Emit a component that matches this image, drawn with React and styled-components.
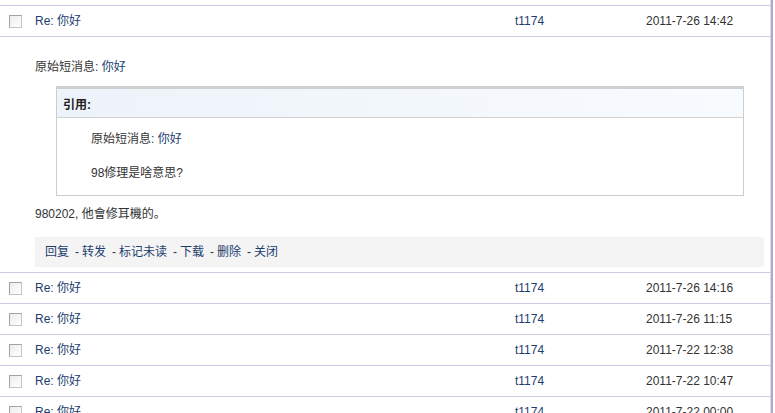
import React from "react";
import styled, { createGlobalStyle } from "styled-components";

const GlobalStyle = createGlobalStyle`
  html, body {
    margin: 0;
    padding: 0;
    background: #fff;
    overflow: hidden;
  }
  body {
    font-family: "Liberation Sans", Arial, "Noto Sans CJK SC", sans-serif;
    font-size: 12px;
    color: #333;
  }
`;

const messages = [
  { subject: "Re: 你好", author: "t1174", date: "2011-7-26 14:16" },
  { subject: "Re: 你好", author: "t1174", date: "2011-7-26 11:15" },
  { subject: "Re: 你好", author: "t1174", date: "2011-7-22 12:38" },
  { subject: "Re: 你好", author: "t1174", date: "2011-7-22 10:47" },
  { subject: "Re: 你好", author: "t1174", date: "2011-7-22 00:00" },
];

const actions = ["回复", "转发", "标记未读", "下载", "删除", "关闭"];

const Frame = styled.div`
  width: 771px;
  height: 413px;
  padding-top: 5px;
  box-sizing: border-box;
  border-right: 1px solid #dcdcf0;
  box-shadow: 2px 0 0 #a9a9d6;
`;

const Row = styled.div`
  display: grid;
  grid-template-columns: 26px 480px 131px 1fr;
  align-items: center;
  height: 30px;
  padding-left: 9px;
  border-top: 1px solid #cbcbe6;
`;

const Check = styled.span`
  display: block;
  width: 11px;
  height: 11px;
  border: 1px solid #a3a3a3;
  border-right-color: #c4c4c4;
  border-bottom-color: #c4c4c4;
  background: linear-gradient(135deg, #ececec, #ffffff);
`;

const Link = styled.a`
  color: #1c3d6f;
  text-decoration: none;
  cursor: pointer;
  line-height: 16px;
`;

const DateText = styled.span`
  color: #333;
`;

const Detail = styled.div`
  border-top: 1px solid #cbcbe6;
  padding: 22px 6px 5px 35px;
`;

const Para = styled.p`
  margin: ${(p) => p.$mt || 0}px 0 0;
  line-height: 16px;
`;

const Quote = styled.div`
  margin: 11px 20px 0 21px;
  border: 1px solid #cdcdcd;
  border-top: 3px solid #cfcfcf;
`;

const QuoteHead = styled.div`
  height: 28px;
  display: flex;
  align-items: center;
  padding-left: 6px;
  font-weight: bold;
  color: #222;
  background: linear-gradient(to right, #edf3fa, #f8fbfe);
  border-bottom: 1px solid #d2d2d2;
`;

const QuoteBody = styled.div`
  padding: 13px 0 14px 34px;
`;

const ActionBar = styled.div`
  margin-top: 15px;
  height: 30px;
  display: flex;
  align-items: center;
  padding-left: 10px;
  background: #f4f4f4;
`;

const Sep = styled.span`
  padding: 0 3px 0 6px;
  color: #333;
`;

const MessageRow = ({ subject, author, date }) => (
  <Row>
    <Check />
    <Link>{subject}</Link>
    <Link>{author}</Link>
    <DateText>{date}</DateText>
  </Row>
);

export default function App() {
  return (
    <>
      <GlobalStyle />
      <Frame>
        <MessageRow subject="Re: 你好" author="t1174" date="2011-7-26 14:42" />
        <Detail>
          <Para>
            原始短消息: <Link>你好</Link>
          </Para>
          <Quote>
            <QuoteHead>引用:</QuoteHead>
            <QuoteBody>
              <Para>
                原始短消息: <Link>你好</Link>
              </Para>
              <Para $mt={18}>98修理是啥意思?</Para>
            </QuoteBody>
          </Quote>
          <Para $mt={10}>980202, 他會修耳機的。</Para>
          <ActionBar>
            {actions.map((a, i) => (
              <React.Fragment key={a}>
                {i > 0 && <Sep>-</Sep>}
                <Link>{a}</Link>
              </React.Fragment>
            ))}
          </ActionBar>
        </Detail>
        {messages.map((m, i) => (
          <MessageRow key={i} {...m} />
        ))}
      </Frame>
    </>
  );
}
